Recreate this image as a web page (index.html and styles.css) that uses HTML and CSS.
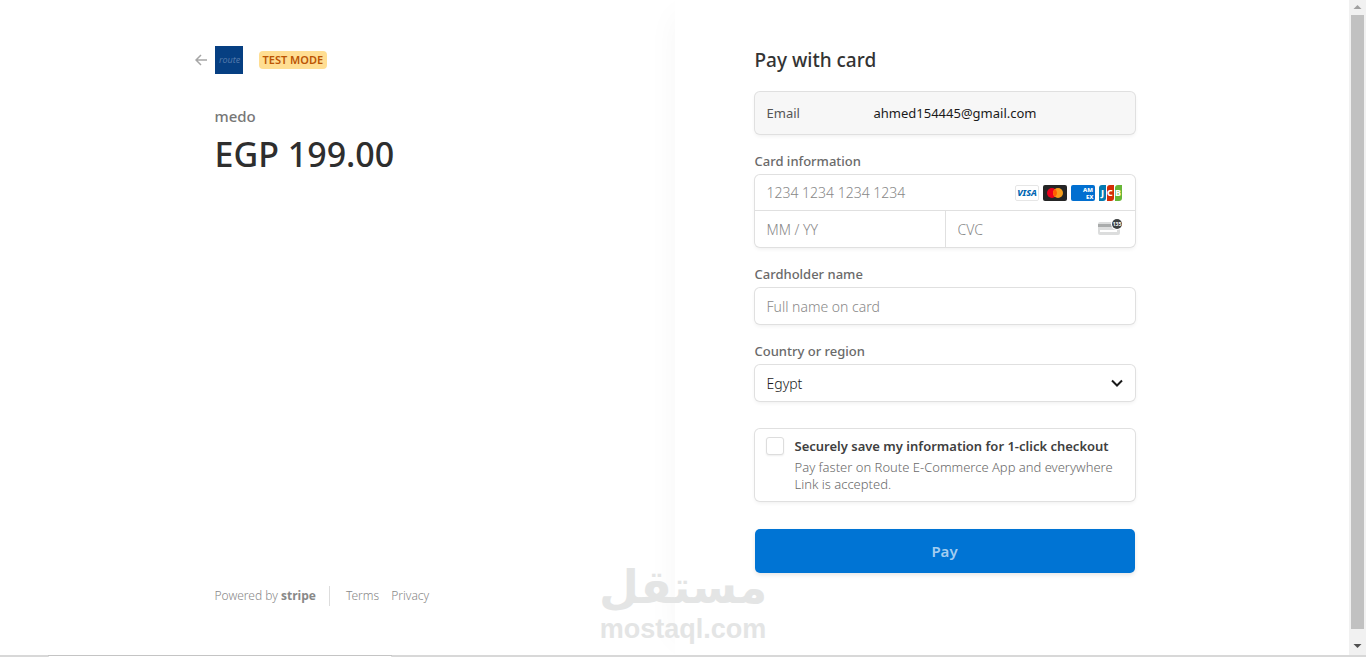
FILE: index.html
```html
<!DOCTYPE html>
<html lang="en">
<head>
<meta charset="UTF-8">
<meta name="viewport" content="width=device-width, initial-scale=1">
<title>Route E-Commerce App</title>
<link rel="stylesheet" href="styles.css">
</head>
<body>
<div class="window">
	<div class="checkout">

		<section class="overview">
			<div class="overview-inner">
				<header class="business">
					<a class="back" href="#" aria-label="Back">
						<svg width="12" height="12" viewBox="0 0 12 12"><path d="M12 6H1M6 1L1 6l5 5" fill="none" stroke="#a6a6a6" stroke-width="1.5"/></svg>
					</a>
					<svg class="business-logo" width="28" height="28" viewBox="0 0 28 28">
						<rect width="28" height="28" fill="#063f82"/>
						<text x="4" y="17" font-size="9" font-style="italic" fill="#5278aa">route</text>
					</svg>
					<span class="badge">TEST MODE</span>
				</header>
				<p class="product">medo</p>
				<p class="amount">EGP 199.00</p>
				<footer class="footer">
					<a class="powered" href="#">Powered by <b>stripe</b></a>
					<a href="#">Terms</a>
					<a href="#">Privacy</a>
				</footer>
			</div>
		</section>

		<main class="payment">
			<form class="payment-form" action="#">
				<h1>Pay with card</h1>

				<div class="box email">
					<span class="email-label">Email</span>
					<span>ahmed154445@gmail.com</span>
				</div>

				<label for="number">Card information</label>
				<div class="box card">
					<div class="card-number">
						<input id="number" type="text" placeholder="1234 1234 1234 1234">
						<div class="brands">
							<svg width="24" height="16" viewBox="0 0 24 16">
								<rect x=".5" y=".5" width="23" height="15" rx="1.5" fill="#fff" stroke="#e6e6e6"/>
								<text x="12" y="11" text-anchor="middle" font-size="9" font-weight="800" font-style="italic" fill="#0066b2">VISA</text>
							</svg>
							<svg width="24" height="16" viewBox="0 0 24 16">
								<rect width="24" height="16" rx="2" fill="#252525"/>
								<circle cx="9" cy="8" r="5" fill="#eb001b"/>
								<circle cx="15" cy="8" r="5" fill="#f79e1b"/>
								<path d="M12 4a5 5 0 0 1 0 8a5 5 0 0 1 0-8z" fill="#ff5f00"/>
							</svg>
							<svg width="24" height="16" viewBox="0 0 24 16">
								<rect width="24" height="16" rx="2" fill="#016fd0"/>
								<text x="12" y="7" font-size="6" font-weight="800" fill="#fff">AM</text>
								<text x="15" y="14" font-size="6" font-weight="800" fill="#fff">EX</text>
							</svg>
							<svg width="24" height="16" viewBox="0 0 24 16">
								<path d="M3 0h4v13a3 3 0 0 1-3 3H0V3a3 3 0 0 1 3-3z" fill="#047ab1"/>
								<path d="M11 0h4v13a3 3 0 0 1-3 3H8V3a3 3 0 0 1 3-3z" fill="#d42d06"/>
								<path d="M19 0h4v13a3 3 0 0 1-3 3h-4V3a3 3 0 0 1 3-3z" fill="#67b637"/>
								<g font-size="9" font-weight="800" fill="#fff"><text x="2" y="11">J</text><text x="8" y="11">C</text><text x="16" y="11">B</text></g>
							</svg>
						</div>
					</div>
					<div class="card-row">
						<input type="text" placeholder="MM / YY" aria-label="Expiration">
						<div class="cvc">
							<input type="text" placeholder="CVC" aria-label="CVC">
							<svg width="26" height="20" viewBox="0 0 26 20">
								<rect x="1" y="3" width="22" height="13" rx="2" fill="#dcdddd"/>
								<path d="M1 5h22v3H1z" fill="#a9abab"/>
								<path d="M3 11h17v2H3z" fill="#fff"/>
								<circle cx="20" cy="5" r="6" fill="#fff"/>
								<circle cx="20" cy="5" r="5" fill="#3d4040"/>
								<text x="20" y="7" text-anchor="middle" font-size="5" font-weight="700" fill="#fff">135</text>
							</svg>
						</div>
					</div>
				</div>

				<label for="name">Cardholder name</label>
				<div class="box">
					<input id="name" type="text" placeholder="Full name on card">
				</div>

				<label for="country">Country or region</label>
				<div class="box country">
					<select id="country">
						<option>Egypt</option>
					</select>
					<svg width="12" height="12" viewBox="0 0 12 12"><path d="M1 3.5l5 5 5-5" fill="none" stroke="#1a1a1a" stroke-width="2"/></svg>
				</div>

				<div class="box save">
					<input id="save" type="checkbox">
					<label for="save">
						<strong>Securely save my information for 1-click checkout</strong>
						<span>Pay faster on Route E-Commerce App and everywhere Link is accepted.</span>
					</label>
				</div>

				<button class="pay" type="submit">Pay</button>
			</form>
		</main>

		<div class="scrollbar">
			<svg width="17" height="15" viewBox="0 0 17 15"><path d="M8.500 5l4 4h-8z" fill="#a0a0a0"/></svg>
			<div class="thumb"></div>
			<svg width="17" height="26" viewBox="0 0 17 26"><path d="M8.500 19l4-4h-8z" fill="#505050"/></svg>
		</div>
	</div>

	<div class="taskbar"><div class="tab"></div></div>

	<div class="watermark">
		<span class="watermark-ar" lang="ar" dir="rtl">مستقل</span>
		<span class="watermark-en">mostaql.com</span>
	</div>
</div>
</body>
</html>
```
FILE: styles.css
```css
* {
	box-sizing: border-box;
}
body {
	margin: 0;
	font-family: "Noto Sans", "Open Sans", sans-serif;
	font-size: 13px;
	line-height: 16px;
	color: #1a1a1a;
	background: #fff;
}
h1, p {
	margin: 0;
}
a {
	color: inherit;
	text-decoration: none;
}
svg {
	display: block;
	flex: none;
}
.window {
	position: relative;
	display: flex;
	flex-direction: column;
	min-height: 100vh;
}
.checkout {
	flex: 1;
	display: grid;
	grid-template-columns: 1fr 1fr 17px;
}

/* left side */
.overview {
	display: flex;
	justify-content: flex-end;
	padding: 46px 80px 49px 40px;
	background: #fff;
}
.overview-inner {
	display: flex;
	flex-direction: column;
	width: 100%;
	max-width: 380px;
}
.business {
	display: flex;
	align-items: center;
	margin-left: -20px;
	margin-bottom: 32px;
}
.back {
	margin-right: 8px;
}
.badge {
	margin-left: 16px;
	padding: 1px 4px;
	border-radius: 4px;
	background: #ffde92;
	color: #bb5504;
	font-size: 11px;
	font-weight: 600;
}
.product {
	margin-bottom: 6px;
	color: #777;
	font-size: 15px;
	font-weight: 500;
	line-height: 20px;
}
.amount {
	font-size: 34px;
	font-weight: 500;
	line-height: 44px;
	color: #2e2e2e;
}
.footer {
	display: flex;
	align-items: center;
	gap: 12px;
	margin-top: auto;
	color: #888;
	font-size: 12px;
	font-weight: 300;
	line-height: 20px;
}
.powered {
	margin-right: 4px;
	padding-right: 13px;
	border-right: 1px solid #ddd;
}
.powered b {
	font-family: "Open Sans", sans-serif;
	font-weight: 700;
}

/* right side */
.payment {
	padding: 48px 40px 28px 80px;
	box-shadow: -15px 0 30px -15px rgba(0, 0, 0, .04);
}
.payment-form {
	max-width: 380px;
}
h1 {
	margin-bottom: 20px;
	font-size: 19px;
	font-weight: 500;
	line-height: 24px;
	color: #333;
}
label {
	display: block;
	margin-bottom: 6px;
	color: #6a6a6a;
	font-weight: 500;
}
.box {
	margin-bottom: 19px;
	border-radius: 5px;
	background: #fff;
	box-shadow: 0 0 0 1px #e0e0e0, 0 2px 4px rgba(0, 0, 0, .07);
}
.box input[type="text"],
.box select {
	display: block;
	width: 100%;
	min-width: 0;
	height: 36px;
	padding: 0 12px;
	border: 0;
	background: transparent;
	color: #1a1a1a;
	font-family: inherit;
	font-size: 14px;
	font-weight: 300;
	outline: none;
}
.box input::placeholder {
	color: #888;
	opacity: 1;
}
.email {
	display: flex;
	align-items: center;
	height: 42px;
	padding: 0 12px;
	background: #f7f7f7;
}
.email-label {
	width: 107px;
	color: #555;
}
.card-number {
	display: flex;
	align-items: center;
	height: 36px;
	padding-right: 12px;
	border-bottom: 1px solid #e0e0e0;
}
.brands {
	display: flex;
	gap: 4px;
}
.card-row {
	display: grid;
	grid-template-columns: 1fr 1fr;
}
.cvc {
	display: flex;
	align-items: center;
	padding-right: 12px;
	border-left: 1px solid #e0e0e0;
}
.country {
	position: relative;
	margin-bottom: 28px;
}
.box select {
	appearance: none;
}
.country svg {
	position: absolute;
	top: 12px;
	right: 12px;
	pointer-events: none;
}
.save {
	display: flex;
	align-items: flex-start;
	gap: 11px;
	margin-bottom: 28px;
	padding: 8px 11px;
}
.save input {
	appearance: none;
	flex: none;
	width: 18px;
	height: 18px;
	margin: 0;
	border: 1px solid #ddd;
	border-radius: 3px;
	background: #fff;
	box-shadow: 0 1px 2px rgba(0, 0, 0, .07);
}
.save label {
	margin: 0;
}
.save strong {
	display: block;
	margin-bottom: 4px;
	color: #404040;
	font-weight: 600;
	line-height: 18px;
}
.save span {
	display: block;
	color: #6a6a6a;
	font-weight: 300;
	line-height: 17px;
}
.pay {
	display: block;
	width: 100%;
	height: 44px;
	border: 0;
	border-radius: 5px;
	background: #0074d4;
	box-shadow: 0 2px 4px rgba(0, 0, 0, .1);
	color: #a3cdf0;
	font-family: inherit;
	font-size: 15px;
	font-weight: 600;
}

/* window edges */
.scrollbar {
	display: flex;
	flex-direction: column;
	background: #f1f1f1;
}
.thumb {
	flex: 1;
	margin: 0 2px;
	background: #c1c1c1;
}
.taskbar {
	height: 2px;
	padding-left: 48px;
	background: #d8d8d8;
}
.tab {
	width: 344px;
	height: 2px;
	border: 1px solid #c4c4c4;
	border-bottom-color: #fff;
}

.watermark {
	position: absolute;
	bottom: 12px;
	left: 50%;
	display: flex;
	flex-direction: column;
	align-items: center;
	transform: translateX(-50%);
	color: #e4e5e5;
	font-weight: 700;
	pointer-events: none;
}
.watermark-ar {
	font-family: "DejaVu Sans", sans-serif;
	font-size: 46px;
	line-height: 52px;
}
.watermark-en {
	font-family: "Liberation Sans", sans-serif;
	font-size: 27px;
	line-height: 32px;
}
```
